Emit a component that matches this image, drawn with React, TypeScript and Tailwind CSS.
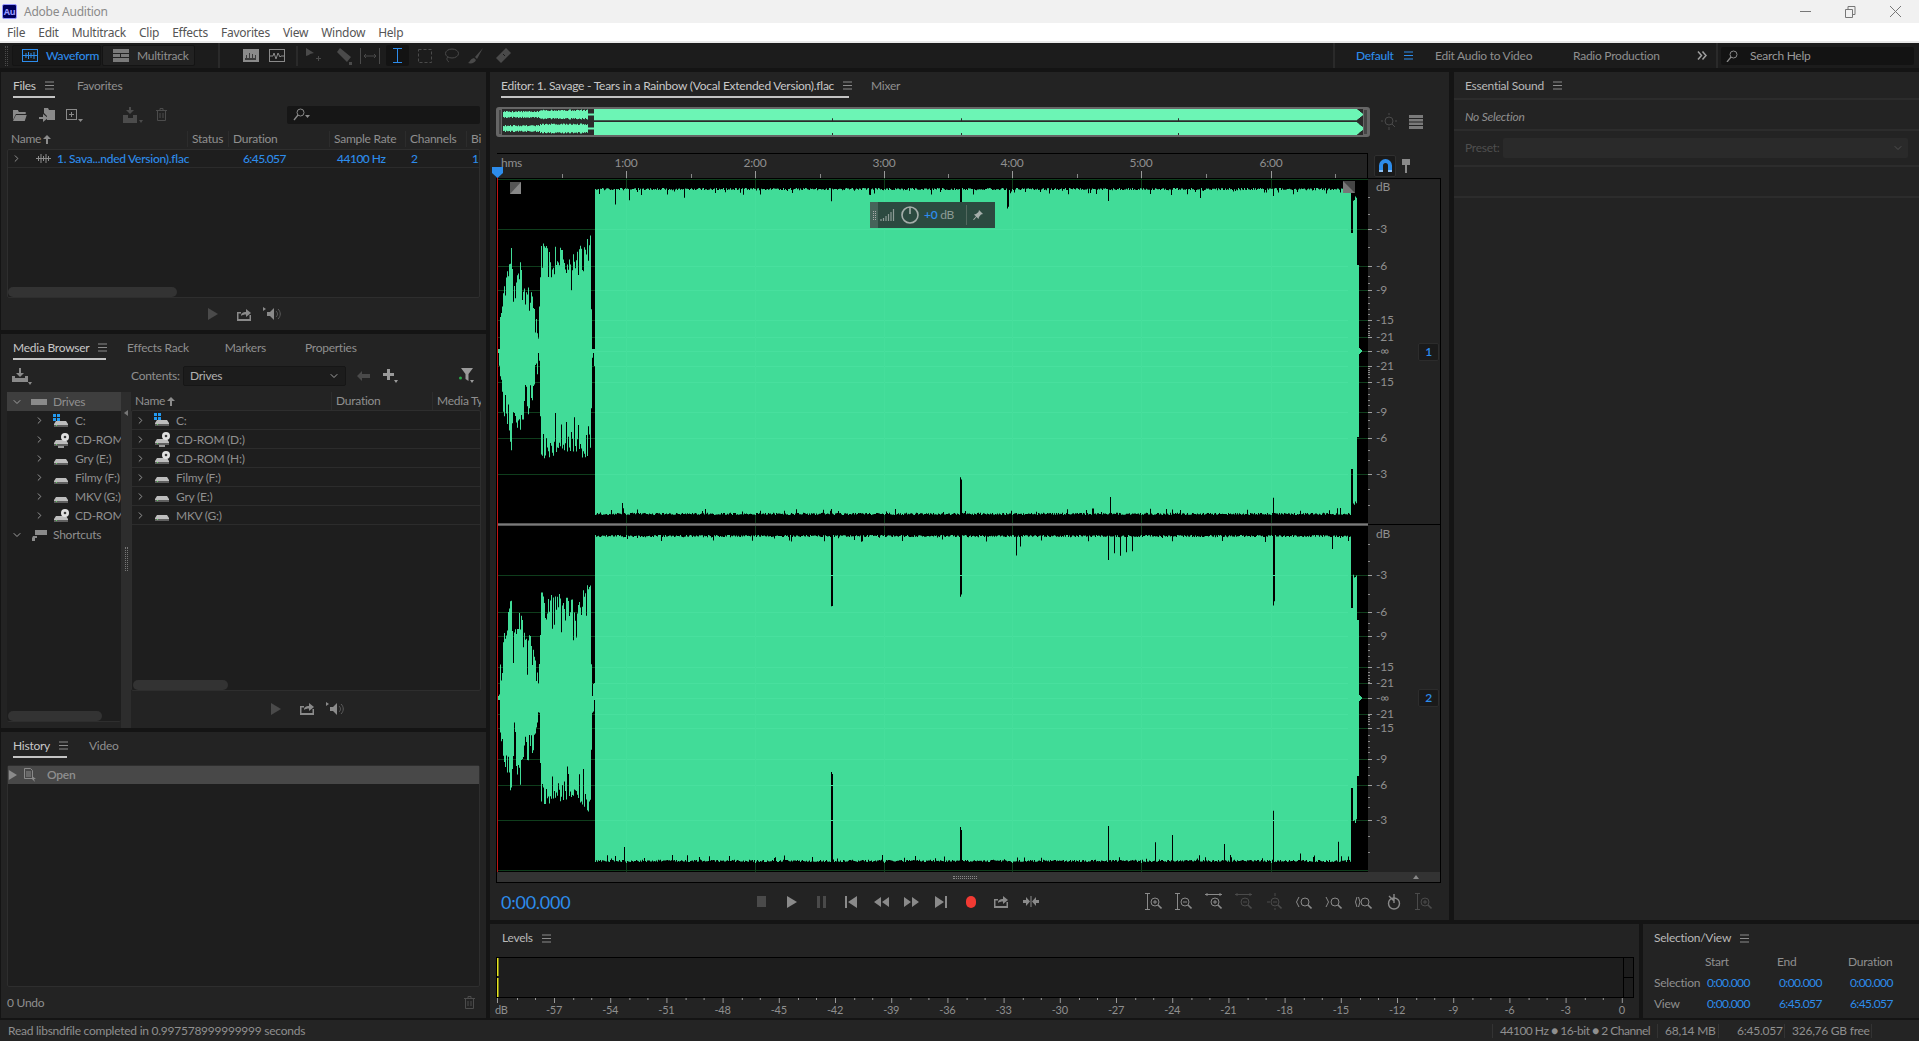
import type { ReactNode } from "react";
import { ChevronDown, ChevronRight } from "lucide-react";

const BLUE = "#2d8ceb";
const GREEN = "#41dc98";

// small seeded generator so the waveform is the same on every load
function makeRandom(seed: number) {
  let s = seed;
  return () => {
    s = (s * 1664525 + 1013904223) % 4294967296;
    return s / 4294967296;
  };
}

const INTRO: [number, number][] = [
  [498, 0], [500, 35], [503, 62], [507, 80], [511, 104], [513, 62], [516, 74], [520, 90],
  [525, 60], [530, 66], [534, 48], [538, 18], [541, 108], [560, 104], [575, 100], [590, 116], [592, 15], [595, 15],
];

function introAmp(x: number) {
  for (let i = 1; i < INTRO.length; i++) {
    const [x0, a0] = INTRO[i - 1];
    const [x1, a1] = INTRO[i];
    if (x <= x1) return a0 + ((a1 - a0) * (x - x0)) / (x1 - x0);
  }
  return 15;
}

type Tail = [number, number, number];

function amplitude(x: number, peak: number, spikes: Record<number, number>, tail: Tail, rand: () => number) {
  if (x < 498) return 0;
  if (x < 595) {
    const a = introAmp(x);
    return Math.max(2, a - rand() * rand() * 46);
  }
  if (x > 1361) return 0;
  if (x > 1358) return 1362 - x;
  if (x > 1356) return tail[2];
  if (x > 1352) return tail[1] - rand() * 5;
  if (x > 1350) return tail[0];
  const r = rand();
  const noise = r > 0.93 ? rand() * 7 : rand() * 2.2;
  return peak - noise - (spikes[x] ?? 0);
}

function channelPath(cy: number, seed: number, topSpikes: Record<number, number>, bottomSpikes: Record<number, number>, tail: Tail) {
  const rand = makeRandom(seed);
  const top: string[] = [];
  const bottom: string[] = [];
  for (let x = 497; x < 1368; x++) {
    const t = amplitude(x, 163, topSpikes, tail, rand);
    const b = amplitude(x, 164, bottomSpikes, tail, rand);
    top.push(`L${x - 497} ${(cy - t).toFixed(1)}L${x - 496} ${(cy - t).toFixed(1)}`);
    bottom.unshift(`L${x - 496} ${(cy + b).toFixed(1)}L${x - 497} ${(cy + b).toFixed(1)}`);
  }
  return `M0 ${cy}${top.join("")}${bottom.join("")}Z`;
}

// the overview strip: a thin copy of the wave, one column per pixel
function overviewPath(cy: number, full: number, seed: number) {
  const rand = makeRandom(seed);
  const top: string[] = [];
  const bottom: string[] = [];
  for (let x = 5; x < 866; x++) {
    let a = full;
    if (x < 42) a = 2.2 + rand() * 1.4;
    else if (x < 90) a = 3.5 + rand() * 1.5;
    else if (x < 96) a = 1;
    else if (x > 858) a = full - (x - 858) * 0.8;
    const dent = x === 334 || x === 463 || x === 680 ? 2 : 0;
    top.push(`L${x} ${(cy - a).toFixed(1)}L${x + 1} ${(cy - a).toFixed(1)}`);
    bottom.unshift(`L${x + 1} ${(cy + a - dent).toFixed(1)}L${x} ${(cy + a - dent).toFixed(1)}`);
  }
  return `M5 ${cy}${top.join("")}${bottom.join("")}Z`;
}

const CH1 = channelPath(173, 11,
  { 615: 15, 629: 10, 684: 8, 831: 12, 960: 30, 961: 30, 1007: 20, 1008: 18, 1108: 12, 1273: 6, 1150: 4, 1200: 5 },
  { 622: 10, 831: 4, 960: 36, 961: 34, 1110: 12, 1150: 5, 1273: 16, 1340: 6 },
  [118, 155, 86]);
const CH2 = channelPath(520, 27,
  { 831: 70, 832: 70, 960: 60, 961: 58, 1012: 14, 1016: 20, 1020: 10, 1108: 25, 1114: 18, 1120: 20, 1126: 16, 1132: 14, 1273: 70, 1274: 66, 1332: 12 },
  { 624: 14, 831: 88, 832: 86, 960: 35, 961: 30, 1108: 35, 1155: 18, 1172: 26, 1224: 16, 1273: 50, 1300: 8, 1338: 20 },
  [90, 125, 78]);
const OVERVIEW_1 = overviewPath(5.5, 5.8, 5);
const OVERVIEW_2 = overviewPath(19.5, 6.5, 9);

const MINUTES = [626, 755, 884, 1012, 1141, 1271];
const RULER_MINORS = [562, 691, 820, 948, 1077, 1206, 1335];

const DB_1 = [["-3", 229], ["-6", 266], ["-9", 290], ["-15", 320], ["-21", 337], ["-∞", 351], ["-21", 366], ["-15", 382], ["-9", 412], ["-6", 438], ["-3", 474]] as const;
const DB_2 = [["-3", 575], ["-6", 612], ["-9", 636], ["-15", 667], ["-21", 683], ["-∞", 698], ["-21", 714], ["-15", 728], ["-9", 759], ["-6", 785], ["-3", 820]] as const;
const MINOR_TICKS = [197, 214, 247, 276, 283, 297, 303, 309, 314, 325, 328, 331, 333, 335, 368, 370, 372, 374, 377, 388, 394, 400, 405, 420, 428, 450, 460, 489, 505];

const LEVELS = ["-57", "-54", "-51", "-48", "-45", "-42", "-39", "-36", "-33", "-30", "-27", "-24", "-21", "-18", "-15", "-12", "-9", "-6", "-3", "0"];

function Hamburger({ color = "#8c8c8c" }: { color?: string }) {
  return (
    <svg width="9" height="9" viewBox="0 0 9 9" className="shrink-0">
      <path d="M0 1h9M0 4.5h9M0 8h9" stroke={color} strokeWidth="1" />
    </svg>
  );
}

function Tab({ label, active, menu, className = "" }: { label: string; active?: boolean; menu?: boolean; className?: string }) {
  return (
    <div className={`flex h-[26px] items-center gap-[9px] whitespace-nowrap border-b-2 pt-[3px] ${active ? "border-[#c4c4c4] text-[#c8c8c8]" : "border-transparent text-[#8f8f8f]"} ${className}`}>
      <span>{label}</span>
      {menu && <Hamburger />}
    </div>
  );
}

function Folder({ color = "#8a8a8a" }: { color?: string }) {
  return (
    <svg width="16" height="14" viewBox="0 0 16 14">
      <path d="M1 2h5l1 2h7v2H4L1 12z" fill={color} />
      <path d="M4 7h11l-2 6H1z" fill={color} />
    </svg>
  );
}

function ImportFile() {
  return (
    <svg width="17" height="16" viewBox="0 0 17 16" fill="#8a8a8a">
      <path d="M5 1h4l1 2h6v10H8V9L5 6z" />
      <path d="M0 10h4V7l5 4-5 4v-3H0z" />
    </svg>
  );
}

function NewFile() {
  return (
    <svg width="18" height="14" viewBox="0 0 18 14">
      <rect x="1.5" y="1.5" width="10" height="10" fill="none" stroke="#8a8a8a" />
      <path d="M6.5 4v5M4 6.5h5" stroke="#8a8a8a" />
      <path d="M13 11h5l-2.5 3z" fill="#8a8a8a" />
    </svg>
  );
}

function InsertClip() {
  return (
    <svg width="21" height="16" viewBox="0 0 21 16" fill="#4c4c4c">
      <path d="M7 0h2v3h3l-4 4-4-4h3z" />
      <path d="M1 8h5v3h5V8h4v8H1z" />
      <path d="M17 13h4l-2 3z" />
    </svg>
  );
}

function Trash({ color = "#4c4c4c" }: { color?: string }) {
  return (
    <svg width="11" height="13" viewBox="0 0 11 13" fill="none" stroke={color}>
      <path d="M0 2.5h11M4 2.5V.5h3v2M1.5 2.5v10h8v-10M4 5v5M7 5v5" />
    </svg>
  );
}

function Play({ color = "#8a8a8a", size = 11 }: { color?: string; size?: number }) {
  return (
    <svg width={size} height={size + 1} viewBox="0 0 11 12">
      <path d="M1 0l10 6-10 6z" fill={color} />
    </svg>
  );
}

function ExportIcon({ color = "#8a8a8a" }: { color?: string }) {
  return (
    <svg width="14" height="13" viewBox="0 0 14 13" fill={color}>
      <path d="M0 4h4v1.5H1.500V11h11V7H14v6H0z" />
      <path d="M4 8c0-3 2-4 5-4V1l5 4-5 4V6.500C7 6.500 5 7 4 8z" />
    </svg>
  );
}

function Speaker() {
  return (
    <svg width="19" height="14" viewBox="0 0 19 14">
      <path d="M0 0l3 2-3 2zM4 5h3l4-4v12l-4-4H4z" fill="#8a8a8a" />
      <path d="M13 4c2 2 2 4 0 6M15 2c3 3 3 7 0 10" fill="none" stroke="#5c5c5c" />
    </svg>
  );
}

function PanelTransport({ offset }: { offset: string }) {
  return (
    <div className={`flex items-center ${offset}`}>
      <Play color="#4a4a4a" />
      <span className="ml-[19px]"><ExportIcon /></span>
      <span className="ml-[12px]"><Speaker /></span>
    </div>
  );
}

function DriveIcon({ kind }: { kind: "plain" | "win" | "cd" | "cdTray" }) {
  return (
    <svg width="16" height="16" viewBox="0 0 16 16" className="shrink-0">
      <path d="M3 8h10l2 3v3H1v-3z" fill="#bdbdbd" />
      <rect x="1" y="12" width="14" height="2" fill="#5f5f5f" />
      <rect x="3" y="12" width="1" height="1" fill="#5fd35f" />
      {kind === "win" && <path d="M0 1h3v3H0zM4 1h3v3H4zM0 5h3v3H0zM4 5h3v3H4z" fill="#2299f0" />}
      {(kind === "cd" || kind === "cdTray") && (
        <g>
          <circle cx="12" cy="5" r="4" fill="#e0e0e0" />
          <circle cx="12" cy="5" r="1.300" fill="#3a3a3a" />
        </g>
      )}
      {kind === "cdTray" && <rect x="5" y="14" width="6" height="2" fill="#9a9a9a" />}
    </svg>
  );
}

const TREE_ROWS = [
  { label: "C:", kind: "win" },
  { label: "CD-ROM (D:)", kind: "cdTray" },
  { label: "Gry (E:)", kind: "plain" },
  { label: "Filmy (F:)", kind: "plain" },
  { label: "MKV (G:)", kind: "plain" },
  { label: "CD-ROM (H:)", kind: "cd" },
] as const;

const LIST_ROWS = [
  { label: "C:", kind: "win" },
  { label: "CD-ROM (D:)", kind: "cdTray" },
  { label: "CD-ROM (H:)", kind: "cd" },
  { label: "Filmy (F:)", kind: "plain" },
  { label: "Gry (E:)", kind: "plain" },
  { label: "MKV (G:)", kind: "plain" },
] as const;

function ColHead({ label, className, sort }: { label: string; className: string; sort?: boolean }) {
  return (
    <div className={`flex h-full shrink-0 items-center gap-[2px] overflow-hidden whitespace-nowrap border-r border-[#2c2c2c] pl-[4px] ${className}`}>
      {label}
      {sort && (
        <svg width="8" height="9" viewBox="0 0 8 9">
          <path d="M4 0l4 4H5v5H3V4H0z" fill="#8c8c8c" />
        </svg>
      )}
    </div>
  );
}

function SearchGlass() {
  return (
    <svg width="17" height="13" viewBox="0 0 17 13" fill="none" stroke="#8a8a8a">
      <circle cx="7.500" cy="4.500" r="3.500" />
      <path d="M5 7l-4 5" strokeWidth="1.300" />
      <path d="M12 7h5l-2.500 3z" fill="#8a8a8a" stroke="none" />
    </svg>
  );
}

function FilesPanel() {
  return (
    <section className="flex h-[258px] flex-col bg-[#232323] px-[6px]">
      <div className="flex pl-[6px]">
        <Tab label="Files" active menu className="w-[42px]" />
        <Tab label="Favorites" className="ml-[22px]" />
      </div>
      <div className="flex h-[33px] items-center pl-[5px]">
        <Folder />
        <span className="ml-[11px]"><ImportFile /></span>
        <span className="ml-[9px]"><NewFile /></span>
        <span className="ml-[39px]"><InsertClip /></span>
        <span className="ml-[13px]"><Trash /></span>
        <div className="ml-[120px] flex h-[18px] w-[197px] items-center rounded-[2px] bg-[#161616] pl-[6px]">
          <SearchGlass />
        </div>
      </div>
      <div className="flex h-[18px] items-center pb-[2px] text-[#8f8f8f]">
        <ColHead label="Name" sort className="w-[181px]" />
        <ColHead label="Status" className="w-[41px]" />
        <ColHead label="Duration" className="w-[101px]" />
        <ColHead label="Sample Rate" className="w-[76px]" />
        <ColHead label="Channels" className="w-[61px]" />
        <ColHead label="Bi" className="w-[14px] border-r-0" />
      </div>
      <div className="relative flex h-[149px] flex-col rounded-[2px] border border-[#2e2e2e] bg-[#1e1e1e]">
        <div className="flex h-[18px] items-center whitespace-nowrap border-b border-[#2b2b2b] font-medium" style={{ color: BLUE }}>
          <ChevronRight size={11} className="ml-[3px] text-[#999]" />
          <svg width="15" height="9" viewBox="0 0 15 9" className="ml-[14px]">
            <path d="M0 4.500h15M2.500 2v5M5 0v9M7.500 2v5M10 0v9M12.500 2v5" stroke="#8c8c8c" />
          </svg>
          <span className="ml-[6px] w-[135px]">1. Sava...nded Version).flac</span>
          <span className="ml-[51px] w-[94px] tracking-[-0.6px]">6:45.057</span>
          <span className="w-[74px] tracking-[-0.5px]">44100 Hz</span>
          <span className="w-[61px]">2</span>
          <span className="w-[7px] overflow-hidden">16</span>
        </div>
        <div className="absolute bottom-0 left-0 h-[10px] w-[169px] rounded-full bg-[#333]" />
      </div>
      <div className="flex flex-1 items-center">
        <PanelTransport offset="ml-[200px]" />
      </div>
    </section>
  );
}

function MediaPanel() {
  return (
    <section className="flex h-[394px] flex-col bg-[#232323] px-[6px]">
      <div className="flex pl-[6px]">
        <Tab label="Media Browser" active menu className="w-[93px]" />
        <Tab label="Effects Rack" className="ml-[21px]" />
        <Tab label="Markers" className="ml-[36px]" />
        <Tab label="Properties" className="ml-[39px]" />
      </div>
      <div className="flex h-[32px] items-center text-[#8f8f8f]">
        <svg width="22" height="17" viewBox="0 0 22 17" className="ml-[5px]" fill="#8a8a8a">
          <path d="M7 0h2v5h3l-4 4-4-4h3z" />
          <path d="M0 8h3v2h10V8h3v6H0z" />
          <path d="M16 14h4l-2 3z" />
        </svg>
        <span className="ml-[97px] w-[52px]">Contents:</span>
        <div className="flex h-[20px] w-[163px] items-center justify-between rounded-[2px] border border-[#161616] bg-[#1c1c1c] pl-[6px] pr-[5px] text-[#b0b0b0]">
          Drives
          <ChevronDown size={12} className="text-[#a0a0a0]" />
        </div>
        <svg width="13" height="10" viewBox="0 0 13 10" className="ml-[11px]" fill="#4a4a4a">
          <path d="M5 0v3h8v4H5v3L0 5z" />
        </svg>
        <svg width="16" height="16" viewBox="0 0 16 16" className="ml-[13px]" fill="#9a9a9a">
          <path d="M4 1h3v4h4v3H7v4H4V8H0V5h4z" />
          <path d="M11 12h4l-2 3z" />
        </svg>
        <svg width="16" height="16" viewBox="0 0 16 16" className="ml-[60px]">
          <path d="M2 0h12L9.500 6v7l-3-2V6z" fill="#9a9a9a" />
          <circle cx="1.500" cy="10" r="1.500" fill="#2aa84a" />
          <path d="M11 12h4l-2 3z" fill="#9a9a9a" />
        </svg>
      </div>
      <div className="flex min-h-0 flex-1 pb-[2px]">
        <div className="relative flex h-[330px] w-[114px] shrink-0 flex-col overflow-hidden rounded-b-[2px] border-b border-[#2e2e2e] bg-[#1e1e1e] text-[#8f8f8f]">
          <div className="flex h-[19px] shrink-0 items-center bg-[#3e3e3e] pl-[4px]">
            <ChevronDown size={12} className="text-[#a0a0a0]" />
            <svg width="16" height="8" viewBox="0 0 16 8" className="ml-[8px]"><path d="M0 1h16v6H0z" fill="#8a8a8a" /></svg>
            <span className="ml-[6px] pt-[1px]">Drives</span>
          </div>
          {TREE_ROWS.map((row) => (
            <div key={row.label} className="flex h-[19px] shrink-0 items-center whitespace-nowrap pl-[27px]">
              <ChevronRight size={11} className="shrink-0 text-[#a0a0a0]" />
              <span className="ml-[8px]"><DriveIcon kind={row.kind} /></span>
              <span className="ml-[6px] pt-[1px]">{row.label}</span>
            </div>
          ))}
          <div className="flex h-[19px] shrink-0 items-center pl-[4px]">
            <ChevronDown size={12} className="text-[#a0a0a0]" />
            <svg width="16" height="12" viewBox="0 0 16 12" className="ml-[8px]" fill="#8a8a8a">
              <path d="M4 1h12v5H4zM2 7h4v2H4v3H1V9z" />
            </svg>
            <span className="ml-[6px]">Shortcuts</span>
          </div>
          <div className="absolute bottom-0 left-[1px] h-[10px] w-[94px] rounded-full bg-[#333]" />
        </div>
        <div className="flex h-[336px] w-[10px] shrink-0 flex-col items-center bg-[#2d2d2d] pt-[18px]">
          <span className="h-0 w-0 border-y-[3px] border-r-[4px] border-y-transparent border-r-[#777]" />
          <span className="mt-[131px] h-[24px] w-[3px] border-x border-dotted border-[#777]" />
        </div>
        <div className="flex w-[351px] flex-col">
          <div className="flex h-[18px] shrink-0 items-center text-[#8f8f8f]">
            <ColHead label="Name" sort className="w-[201px]" />
            <ColHead label="Duration" className="w-[101px]" />
            <ColHead label="Media Type" className="w-[48px] border-r-0" />
          </div>
          <div className="relative h-[281px] rounded-[2px] border border-[#2e2e2e] bg-[#1e1e1e] text-[#8f8f8f]">
            {LIST_ROWS.map((row) => (
              <div key={row.label} className="flex h-[19px] items-center border-b border-[#2c2c2c] pl-[3px]">
                <ChevronRight size={11} className="shrink-0 text-[#a0a0a0]" />
                <span className="ml-[8px]"><DriveIcon kind={row.kind} /></span>
                <span className="ml-[6px] pt-[2px]">{row.label}</span>
              </div>
            ))}
            <div className="absolute bottom-0 left-[1px] h-[10px] w-[95px] rounded-full bg-[#333]" />
          </div>
          <div className="flex flex-1 items-center">
            <PanelTransport offset="ml-[139px]" />
          </div>
        </div>
      </div>
    </section>
  );
}

function HistoryPanel() {
  return (
    <section className="flex h-[286px] flex-col bg-[#232323] px-[6px]">
      <div className="flex pl-[6px]">
        <Tab label="History" active menu className="w-[54px]" />
        <Tab label="Video" className="ml-[22px]" />
      </div>
      <div className="mt-[7px] h-[222px] rounded-[2px] border border-[#2e2e2e] bg-[#1e1e1e]">
        <div className="flex h-[18px] items-center bg-[#484848] font-semibold text-[#8f8f8f]">
          <Play color="#8a8a8a" size={9} />
          <svg width="13" height="14" viewBox="0 0 13 14" className="ml-[6px]" fill="none" stroke="#8a8a8a">
            <path d="M1.500.5h6l2 2v8h-8zM3 4h5M3 6h5M3 8h5" />
            <path d="M9 8l4 3-2 0 1 3-1-1-2-2z" fill="#8a8a8a" stroke="none" />
          </svg>
          <span className="ml-[11px]">Open</span>
        </div>
      </div>
      <div className="flex flex-1 items-center justify-between text-[#8f8f8f]">
        <span>0 Undo</span>
        <span className="mr-[5px]"><Trash color="#4c4c4c" /></span>
      </div>
    </section>
  );
}

function Overview() {
  return (
    <div className="relative ml-[6px] h-[30px] w-[874px] rounded-[3px] border-2 border-[#666] bg-[#2b2b2b]">
      <svg width="870" height="26" viewBox="0 0 870 26" className="block">
        <path d={OVERVIEW_1} fill="#6cf5b5" />
        <path d={OVERVIEW_2} fill="#6cf5b5" />
        <rect x="0.500" y="0.500" width="3" height="25" fill="#444" stroke="#666" />
        <rect x="865.500" y="0.500" width="4" height="25" fill="#444" stroke="#666" />
      </svg>
    </div>
  );
}

function Ruler() {
  return (
    <svg width="871" height="25" viewBox="0 0 871 25" className="block shrink-0 overflow-visible">
      <rect width="871" height="25" fill="#232323" />
      <rect width="871" height="1" fill="#000" />
      <rect x="870" width="1" height="25" fill="#000" />
      <text x="4" y="14" fill="#8f8f8f" className="text-[12px]">hms</text>
      {MINUTES.map((x, i) => (
        <g key={x}>
          <text x={x - 497} y="14" textAnchor="middle" fill="#8f8f8f" className="text-[12px]">{i + 1}:00</text>
          <rect x={x - 497} y="18" width="1" height="7" fill="#999" />
        </g>
      ))}
      {RULER_MINORS.map((x) => (
        <rect key={x} x={x - 497} y="21" width="1" height="4" fill="#888" />
      ))}
      <path d="M-5 14h11v6l-5.500 5-5.500-5z" fill={BLUE} />
    </svg>
  );
}

function Waveform() {
  const lines = [...DB_1, ...DB_2];
  return (
    <svg width="871" height="694" viewBox="0 0 871 694" className="block shrink-0">
      <rect width="871" height="694" fill="#000" />
      {lines.map(([label, y]) => (
        <rect key={`${label}${y}`} x="0" y={y - 178} width="871" height="1" fill="#0f3d1c" />
      ))}
      {MINUTES.map((x) => (
        <rect key={x} x={x - 497} y="0" width="1" height="694" fill="#0f3d1c" />
      ))}
      <rect y="1" width="871" height="1" fill="#0f3d1c" />
      <rect y="692" width="871" height="1" fill="#0f3d1c" />
      <path d={CH1} fill={GREEN} />
      <path d={CH2} fill={GREEN} />
      {lines.map(([label, y]) => (
        <rect key={`${label}${y}`} x="98" y={y - 178} width="753" height="1" fill="#48e09e" />
      ))}
      {MINUTES.map((x) => (
        <g key={x} fill="#45de9b">
          <rect x={x - 497} y="11" width="1" height="326" />
          <rect x={x - 497} y="357" width="1" height="328" />
        </g>
      ))}
      <rect y="345" width="871" height="3" fill="#555" />
      <rect y="346" width="871" height="1" fill="#7a7a7a" />
      <rect x="0" y="0" width="1" height="694" fill="#c01414" />
      <path d="M13 4h11v12H13z" fill="#555" />
      <path d="M13 16L24 4v12z" fill="#888" />
      <path d="M846 3h12v12h-12z" fill="#777" />
      <path d="M846 3l12 12V3z" fill="#444" />
    </svg>
  );
}

function ScaleColumn() {
  const ticks = [...DB_1, ...DB_2];
  const minors = [...MINOR_TICKS, ...MINOR_TICKS.map((y) => y + 347)];
  return (
    <svg width="73" height="694" viewBox="0 0 73 694" className="absolute left-0 top-0">
      <rect width="73" height="1" fill="#000" />
      <rect y="346" width="73" height="1" fill="#000" />
      <text x="8" y="13" fill="#8f8f8f" className="text-[12px]">dB</text>
      <text x="8" y="360" fill="#8f8f8f" className="text-[12px]">dB</text>
      {ticks.map(([label, y]) => (
        <g key={`${label}${y}`}>
          <rect x="0" y={y - 178} width="4" height="1" fill="#a0a0a0" />
          <text x="8" y={y - 178 + 4} fill="#8f8f8f" className="text-[12px]">{label}</text>
        </g>
      ))}
      {minors.map((y) => (
        <rect key={y} x="0" y={y - 178} width="2" height="1" fill="#8a8a8a" />
      ))}
    </svg>
  );
}

function ChannelBadge({ n, className }: { n: number; className: string }) {
  return (
    <div className={`absolute left-[50px] flex h-[18px] w-[21px] items-center justify-center rounded-[2px] border border-[#2c2c2c] bg-[#1a1a1a] font-semibold ${className}`} style={{ color: BLUE }}>
      {n}
    </div>
  );
}

function GainHud() {
  return (
    <div className="absolute left-[373px] top-[24px] flex h-[26px] w-[125px] items-center bg-[#2c4a40]">
      <div className="flex h-full w-[8px] items-center justify-center bg-[#46645a]">
        <span className="h-[9px] w-[3px] border-x border-dotted border-[#aaa]" />
      </div>
      <svg width="16" height="14" viewBox="0 0 16 14" className="ml-[2px]">
        <path d="M1 13v-2M3.500 13v-3M6 13V8M8.500 13V6M11 13V4M13.500 13V1" stroke="#8c9b95" strokeWidth="1.200" />
      </svg>
      <svg width="18" height="18" viewBox="0 0 18 18" className="ml-[5px]" fill="none" stroke="#a5aeaa" strokeWidth="1.600">
        <circle cx="9" cy="9" r="8" />
        <path d="M9 1v7" />
      </svg>
      <span className="ml-[5px] w-[42px] whitespace-nowrap text-[#8c9b95]">
        <span className="font-semibold" style={{ color: BLUE }}>+0</span> dB
      </span>
      <span className="h-[20px] w-px bg-[#53685f]" />
      <svg width="10" height="10" viewBox="0 0 10 10" className="ml-[6px]" fill="#a5aeaa">
        <path d="M6 0l4 4-2 .5-2 2.500-.5 2L3.500 7 1 10 0 9.500 3 6.500 1 4.500l2-.5 2.500-2z" />
      </svg>
    </div>
  );
}

function Tool({ children }: { children: ReactNode }) {
  return <div className="flex w-[30px] shrink-0 items-center justify-center">{children}</div>;
}

function ZoomIcon({ sign, mark, color }: { sign?: string; mark: "v" | "h" | "a" | "l" | "r" | "b"; color: string }) {
  return (
    <svg width="17" height="17" viewBox="0 0 17 17" fill="none" stroke={color}>
      <circle cx="10" cy="9" r="4" />
      <path d="M13 12l3.500 3.500" strokeWidth="1.600" />
      {sign && <path d="M8 9h4" />}
      {sign === "+" && <path d="M10 7v4" />}
      {mark === "v" && <path d="M2.500 0v17M0 .5h5M0 16.500h5" />}
      {mark === "h" && <path d="M0 1.500h17M2 0v3M15 0v3" />}
      {mark === "a" && <path d="M10 0v3M10 15v2M2 9h3" />}
      {mark === "l" && <path d="M4 4L1.500 9 4 14" />}
      {mark === "r" && <path d="M1 4l2.500 5L1 14" />}
      {mark === "b" && <path d="M2 4L0.500 9 2 14M3.500 4L5 9 3.500 14" />}
    </svg>
  );
}

function TransportBar() {
  const c = "#8a8a8a";
  const dim = "#4a4a4a";
  return (
    <div className="flex h-[38px] items-center">
      <span className="ml-[11px] w-[245px] text-[18px] leading-none" style={{ color: BLUE }}>0:00.000</span>
      <Tool><svg width="9" height="11"><rect width="9" height="11" fill={dim} /></svg></Tool>
      <Tool><Play color={c} /></Tool>
      <Tool><svg width="9" height="12" fill={dim}><path d="M0 0h3v12H0zM6 0h3v12H6z" /></svg></Tool>
      <Tool><svg width="12" height="12" fill={c}><path d="M0 0h2v12H0zM12 0v12L3 6z" /></svg></Tool>
      <Tool><svg width="15" height="10" fill={c}><path d="M7 0v10L0 5zM15 0v10L8 5z" /></svg></Tool>
      <Tool><svg width="15" height="10" fill={c}><path d="M0 0v10l7-5zM8 0v10l7-5z" /></svg></Tool>
      <Tool><svg width="12" height="12" fill={c}><path d="M10 0h2v12h-2zM0 0v12l9-6z" /></svg></Tool>
      <Tool><span className="h-[12px] w-[10px] rounded-full bg-[#f13a33]" /></Tool>
      <Tool><ExportIcon /></Tool>
      <Tool>
        <svg width="16" height="11" fill={c}>
          <path d="M0 4h3V1l4 4.500L3 10V7H0zM16 4h-3V1L9 5.500l4 4.500V7h3zM7.500 0h1v11h-1z" />
        </svg>
      </Tool>
      <div className="ml-[92px] flex">
        <Tool><ZoomIcon sign="+" mark="v" color={c} /></Tool>
        <Tool><ZoomIcon sign="-" mark="v" color={c} /></Tool>
        <Tool><ZoomIcon sign="+" mark="h" color={c} /></Tool>
        <Tool><ZoomIcon sign="-" mark="h" color={dim} /></Tool>
        <Tool><ZoomIcon sign="-" mark="a" color={dim} /></Tool>
        <Tool><ZoomIcon mark="l" color={c} /></Tool>
        <Tool><ZoomIcon mark="r" color={c} /></Tool>
        <Tool><ZoomIcon mark="b" color={c} /></Tool>
        <Tool>
          <svg width="15" height="16" viewBox="0 0 15 16" fill="none" stroke={c} strokeWidth="1.400">
            <circle cx="8" cy="9.500" r="5.500" />
            <path d="M8 0v9M3 2l5 5" />
          </svg>
        </Tool>
        <Tool><ZoomIcon sign="+" mark="v" color={dim} /></Tool>
      </div>
    </div>
  );
}

function EditorPanel() {
  return (
    <section className="flex h-full w-[959px] shrink-0 flex-col bg-[#232323]">
      <div className="flex pl-[11px]">
        <Tab label="Editor: 1. Savage - Tears in a Rainbow (Vocal Extended Version).flac" active menu className="w-[348px] justify-between" />
        <Tab label="Mixer" className="ml-[22px]" />
      </div>
      <div className="mt-[9px] flex items-center">
        <Overview />
        <svg width="18" height="18" viewBox="0 0 18 18" className="ml-[10px]" fill="none" stroke="#4a4a4a">
          <circle cx="9" cy="8" r="4" />
          <path d="M12 11l3 3M9 0v2M9 14v3M1 8h2M15 8h2" />
        </svg>
        <svg width="14" height="14" viewBox="0 0 14 14" className="ml-[11px]" fill="#7a7a7a">
          <path d="M0 0h14v3H0zM0 4h14v2.500H0zM0 7.500h14V10H0zM0 11h14v3H0z" />
        </svg>
      </div>
      <div className="ml-[7px] mt-[16px] flex items-center">
        <Ruler />
        <div className="ml-[6px] flex h-[22px] w-[22px] items-center justify-center rounded-[2px] border border-[#2f2f2f] bg-[#1a1a1a]">
          <svg width="13" height="13" viewBox="0 0 13 13" fill={BLUE}>
            <path d="M0 6.500a6.500 6.500 0 0 1 13 0V11H9V6.500a2.500 2.500 0 0 0-5 0V11H0z" />
            <path d="M0 11h4v2H0zM9 11h4v2H9z" fill="#8ec1f5" />
          </svg>
        </div>
        <svg width="8" height="14" viewBox="0 0 8 14" className="ml-[6px]" fill="#8a8a8a">
          <path d="M0 0h8v6H5v8H3V6H0z" />
        </svg>
      </div>
      <div className="ml-[6px] w-[945px] border-x border-b border-black">
        <div className="flex">
          <div className="relative">
            <Waveform />
            <GainHud />
          </div>
          <div className="relative h-[694px] w-[73px]">
            <ScaleColumn />
            <ChannelBadge n={1} className="top-[165px]" />
            <ChannelBadge n={2} className="top-[511px]" />
          </div>
        </div>
        <div className="relative flex h-[10px] items-center justify-center bg-[#333]">
          <span className="ml-[-8px] h-[3px] w-[24px] border-y border-dotted border-[#888]" />
          <span className="absolute right-[21px] h-0 w-0 border-x-[3px] border-b-[4px] border-x-transparent border-b-[#888]" />
        </div>
      </div>
      <TransportBar />
    </section>
  );
}

function EssentialPanel() {
  return (
    <section className="flex min-w-0 flex-1 flex-col bg-[#232323]">
      <div className="flex h-[28px] items-center gap-[9px] border-b-2 border-[#2c2c2c] pl-[11px] pt-[1px] text-[#b8b8b8]">
        Essential Sound
        <Hamburger />
      </div>
      <div className="flex h-[31px] items-center border-b-2 border-[#2c2c2c] pl-[11px] pt-[5px] italic text-[#8f8f8f]">No Selection</div>
      <div className="flex h-[36px] items-center border-b-2 border-[#2c2c2c] pl-[11px] text-[#4f4f4f]">
        <span className="w-[38px]">Preset:</span>
        <div className="flex h-[20px] w-[405px] items-center justify-end rounded-[2px] bg-[#2a2a2a] pr-[4px]">
          <ChevronDown size={12} className="text-[#4f4f4f]" />
        </div>
      </div>
      <div className="h-[31px] border-b-2 border-[#2c2c2c]" />
    </section>
  );
}

function LevelsPanel() {
  return (
    <section className="flex w-[1149px] shrink-0 flex-col bg-[#232323]">
      <div className="flex h-[28px] items-center gap-[9px] pl-[12px] text-[#b8b8b8]">
        Levels
        <Hamburger />
      </div>
      <svg width="1149" height="61" viewBox="0 0 1149 61" className="mt-[5px] block">
        <rect x="6.500" y="0.500" width="1137" height="40" fill="#1d1d1d" stroke="#000" />
        <rect x="1133" y="0" width="1" height="41" fill="#000" />
        <rect x="1133" y="20" width="10" height="1" fill="#000" />
        <rect x="7" y="1" width="1.500" height="18" fill="#e6e61e" />
        <rect x="7" y="21" width="1.500" height="19" fill="#e6e61e" />
        {LEVELS.map((label, i) => (
          <g key={label}>
            <rect x={64 + i * 56.2} y="41" width="1" height="5" fill="#999" />
            <rect x={64 + i * 56.2 - 19} y="41" width="1" height="2" fill="#999" />
            <rect x={64 + i * 56.2 - 37} y="41" width="1" height="2" fill="#999" />
            <text x={64 + i * 56.2} y="57" textAnchor="middle" fill="#8f8f8f" className="text-[11px]">{label}</text>
          </g>
        ))}
        <rect x="7" y="41" width="1" height="5" fill="#999" />
        <text x="5" y="57" fill="#8f8f8f" className="text-[11px]">dB</text>
      </svg>
    </section>
  );
}

function SelectionPanel() {
  const rows = [
    ["Selection", "0:00.000", "0:00.000", "0:00.000"],
    ["View", "0:00.000", "6:45.057", "6:45.057"],
  ];
  return (
    <section className="flex min-w-0 flex-1 flex-col bg-[#232323] pl-[11px]">
      <div className="flex h-[28px] items-center gap-[9px] text-[#b8b8b8]">
        Selection/View
        <Hamburger />
      </div>
      <div className="grid grid-cols-[51px_72px_71px_60px] text-[#8f8f8f]">
        <span className="h-[20px]" />
        <span className="flex h-[20px] items-center">Start</span>
        <span className="flex h-[20px] items-center">End</span>
        <span className="flex h-[20px] items-center">Duration</span>
        {rows.map((row) =>
          row.map((cell, i) => (
            <span key={`${row[0]}${i}`} className={`flex h-[21px] items-center ${i > 0 ? "pl-[2px] tracking-[-0.6px]" : ""}`} style={i > 0 ? { color: BLUE } : undefined}>
              {cell}
            </span>
          )),
        )}
      </div>
    </section>
  );
}

function StatusBar() {
  const cells = [
    { text: "44100 Hz ● 16-bit ● 2 Channel", w: "w-[165px] tracking-[-0.5px]" },
    { text: "68,14 MB", w: "w-[61px]" },
    { text: "6:45.057", w: "w-[66px] pl-[18px]" },
    { text: "326,76 GB free", w: "w-[87px]" },
  ];
  return (
    <footer className="flex h-[21px] items-center bg-[#242424] pl-[8px] text-[#8f8f8f]">
      <span className="w-[1484px] shrink-0">Read libsndfile completed in 0.997578999999999 seconds</span>
      {cells.map((c) => (
        <span key={c.text} className={`flex h-[14px] shrink-0 items-center whitespace-nowrap border-l border-[#333] pl-[7px] ${c.w}`}>{c.text}</span>
      ))}
      <span className="h-[14px] border-l border-[#333]" />
    </footer>
  );
}

const MENU = ["File", "Edit", "Multitrack", "Clip", "Effects", "Favorites", "View", "Window", "Help"];

function Chrome() {
  return (
    <>
      <div className="flex h-[23px] items-center justify-between bg-[#f1f1f1] font-['Noto_Sans',sans-serif] text-[12px] text-[#8a8a8a]">
        <div className="flex items-center">
          <div className="ml-[2px] flex h-[15px] w-[15px] items-center justify-center rounded-[2px] border border-[#9999ff] bg-[#00005b] text-[9px] font-bold text-[#9999ff]">Au</div>
          <span className="ml-[7px]">Adobe Audition</span>
        </div>
        <div className="flex items-center gap-[34px] pr-[18px]">
          <svg width="11" height="11" stroke="#777"><path d="M0 5.500h11" /></svg>
          <svg width="11" height="12" fill="none" stroke="#777"><path d="M.5 3.500h7v8h-7zM3 3.500V.5h7v8H8" /></svg>
          <svg width="11" height="11" stroke="#777"><path d="M0 0l11 11M11 0L0 11" /></svg>
        </div>
      </div>
      <div className="flex h-[20px] items-start gap-[13px] border-b-2 border-[#e9e9e9] bg-white pl-[7px] font-['Noto_Sans',sans-serif] text-[12px] leading-[19px] text-[#555]">
        {MENU.map((m) => (
          <span key={m}>{m}</span>
        ))}
      </div>
    </>
  );
}

function Toolbar() {
  const on = "#8a8a8a";
  const off = "#4a4a4a";
  return (
    <div className="flex h-[25px] shrink-0 items-center whitespace-nowrap bg-[#1c1c1c]">
      <span className="ml-[5px] h-[20px] w-[3px] border-x border-dotted border-[#4a4a4a]" />
      <div className="ml-[4px] flex h-[21px] w-[89px] items-center rounded-[2px] border border-[#141414] bg-[#181818] pl-[9px] font-medium" style={{ color: BLUE }}>
        <svg width="16" height="13" viewBox="0 0 16 13" fill="none" stroke={BLUE} className="mr-[8px]">
          <rect x=".5" y=".5" width="15" height="12" />
          <path d="M1 6.500h14M4 4v5M6.500 3v7M9 4v5M12 3v7" />
        </svg>
        Waveform
      </div>
      <div className="ml-px flex h-[21px] w-[93px] items-center rounded-[2px] border border-[#141414] bg-[#222] pl-[10px] text-[#8f8f8f]">
        <svg width="16" height="13" viewBox="0 0 16 13" fill="#7a7a7a" className="mr-[8px]">
          <path d="M0 0h16v4H0zM0 5h7v3H0zM8 5h8v3H8zM0 9h16v4H0z" />
        </svg>
        Multitrack
      </div>
      <span className="ml-[23px] h-[25px] w-[2px] bg-[#2a2a2a]" />
      <svg width="16" height="13" viewBox="0 0 16 13" className="ml-[23px]" fill={on}>
        <path d="M0 0h16v13H0z" />
        <path d="M2 9h1V6h1v3h2V4h1v5h2V5h1v4h2V6h1v5H2z" fill="#3b3b3b" />
      </svg>
      <svg width="16" height="13" viewBox="0 0 16 13" className="ml-[10px]" fill="none" stroke={on}>
        <rect x=".5" y=".5" width="15" height="12" />
        <path d="M1 7h3l1-3 2 6 2-6 2 4 1-1h3" />
      </svg>
      <span className="ml-[11px] h-[20px] w-[2px] bg-[#2a2a2a]" />
      <svg width="18" height="16" viewBox="0 0 18 16" className="ml-[8px]" fill={off}>
        <path d="M0 0l8 5-4 1-1 1-3 1zM10 10h2V8h1v2h2v1h-2v2h-1v-2h-2z" />
      </svg>
      <svg width="18" height="18" viewBox="0 0 18 18" className="ml-[11px]" fill={off}>
        <path d="M5 1l11 9-4 5L2 5zM14 15h3v3h-3z" />
      </svg>
      <svg width="20" height="16" viewBox="0 0 20 16" className="ml-[7px]" stroke={off} fill="none">
        <path d="M.5 0v16M19.500 0v16M4 8h12M6 6L4 8l2 2M14 6l2 2-2 2" />
      </svg>
      <div className="ml-[6px] flex h-[21px] w-[23px] items-center justify-center rounded-[2px] bg-[#131313]">
        <svg width="9" height="15" viewBox="0 0 9 15" stroke={BLUE} fill="none">
          <path d="M0 .5h9M0 14.500h9M4.500 0v15" />
        </svg>
      </div>
      <svg width="14" height="14" viewBox="0 0 14 14" className="ml-[9px]" stroke={off} fill="none" strokeDasharray="3 2">
        <rect x=".5" y=".5" width="13" height="13" />
      </svg>
      <svg width="16" height="15" viewBox="0 0 16 15" className="ml-[11px]" stroke={off} fill="none">
        <ellipse cx="9" cy="5.500" rx="6.500" ry="4.500" />
        <path d="M5 9c-2 1-1 4 1 5" />
      </svg>
      <svg width="16" height="16" viewBox="0 0 16 16" className="ml-[9px]" fill={off}>
        <path d="M15 0L7 9l2 2zM6 10l2 2c-1 3-5 4-8 3 2-1 2-4 6-5z" />
      </svg>
      <svg width="17" height="17" viewBox="0 0 17 17" className="ml-[11px]" fill={off}>
        <path d="M11 1l5 5-10 10-5-5z" />
        <path d="M8 7l2 2" stroke="#1c1c1c" />
      </svg>
      <span className="ml-[821px] h-[25px] w-[2px] bg-[#2a2a2a]" />
      <span className="ml-[21px] w-[48px] font-medium" style={{ color: BLUE }}>Default</span>
      <Hamburger color={BLUE} />
      <span className="ml-[22px] w-[95px] text-[#8f8f8f]">Edit Audio to Video</span>
      <span className="ml-[43px] w-[85px] text-[#8f8f8f]">Radio Production</span>
      <svg width="10" height="9" viewBox="0 0 10 9" className="ml-[39px]" fill="none" stroke="#a0a0a0" strokeWidth="1.500">
        <path d="M1 .5l3.500 4L1 8.500M5.500 .5l3.500 4-3.500 4" />
      </svg>
      <span className="ml-[9px] h-[25px] w-[2px] bg-[#2a2a2a]" />
      <div className="ml-[3px] flex h-[18px] w-[193px] items-center rounded-[2px] bg-[#131313] pl-[5px] text-[#9a9a9a]">
        <svg width="12" height="12" viewBox="0 0 12 12" fill="none" stroke="#8a8a8a">
          <circle cx="7.500" cy="4.500" r="3.500" />
          <path d="M5 7l-4 5" strokeWidth="1.300" />
        </svg>
        <span className="ml-[12px]">Search Help</span>
      </div>
    </div>
  );
}

export default function App() {
  return (
    <div className="flex h-[1041px] w-[1919px] flex-col overflow-hidden bg-[#141414] font-['Lato',sans-serif] text-[12px] tracking-[-0.25px]">
      <Chrome />
      <Toolbar />
      <div className="flex min-h-0 flex-1 gap-[4px] pb-[2px] pl-[1px] pt-[4px]">
        <div className="flex w-[485px] shrink-0 flex-col gap-[4px]">
          <FilesPanel />
          <MediaPanel />
          <HistoryPanel />
        </div>
        <div className="flex min-w-0 flex-1 flex-col gap-[4px]">
          <div className="flex h-[848px] gap-[5px]">
            <EditorPanel />
            <EssentialPanel />
          </div>
          <div className="flex min-h-0 flex-1 gap-[4px]">
            <LevelsPanel />
            <SelectionPanel />
          </div>
        </div>
      </div>
      <StatusBar />
    </div>
  );
}
